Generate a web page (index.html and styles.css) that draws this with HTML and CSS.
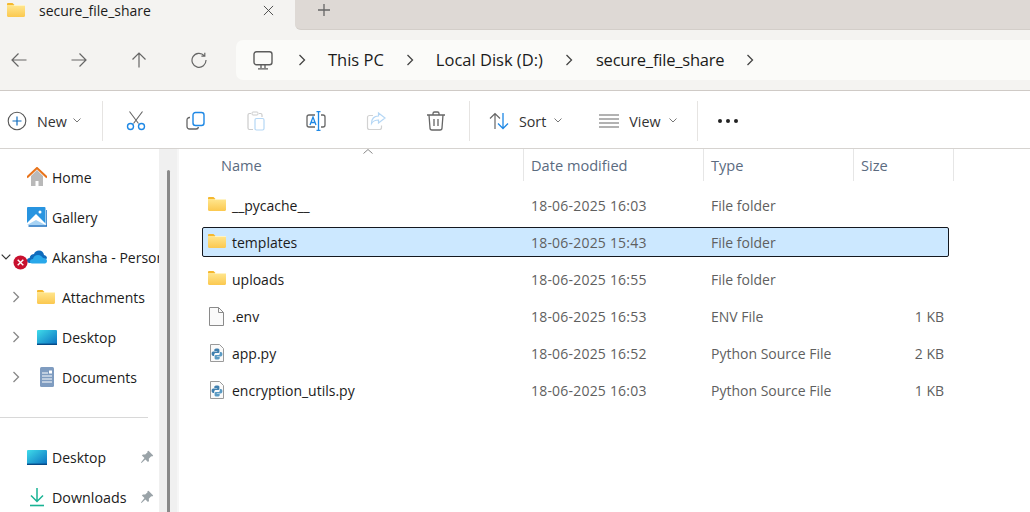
FILE: index.html
```html
<!DOCTYPE html>
<html>
<head>
    <title>secure_file_share</title>
    <link rel="stylesheet" href="styles.css">
</head>

<body>
    <svg class="defs" width="0" height="0">
        <defs>
            <linearGradient id="folderFill" x1="0" y1="0" x2="0" y2="1">
                <stop offset="0" stop-color="#ffe68f"/>
                <stop offset="1" stop-color="#fbc84f"/>
            </linearGradient>
            <linearGradient id="deskFill" x1="0" y1="0" x2="1" y2="1">
                <stop offset="0" stop-color="#3fdcea"/>
                <stop offset="1" stop-color="#0a6fc0"/>
            </linearGradient>
            <symbol id="folder" viewBox="0 0 18 14">
                <path d="M0 1.200C0 .5.500 0 1.200 0h4.300l2 2H0z" fill="#f5b82e"/>
                <path d="M0 2h16.800c.7 0 1.200.5 1.200 1.200v9.600c0 .7-.5 1.200-1.200 1.200H1.200C.5 14 0 13.500 0 12.800z" fill="url(#folderFill)"/>
                <path d="M7 2.500h11" stroke="#fff3c4" stroke-width="1"/>
            </symbol>
            <symbol id="pyfile" viewBox="0 0 14 18">
                <path d="M.5.500h9l4 4v13H.5z" fill="#fafafa" stroke="#9a9a9a"/>
                <path d="M7 4.500c-1.800 0-2.700.5-2.700 1.500v1.100h2.900v.5H3.200C2.200 7.600 1.600 8.500 1.600 9.800s.6 2.100 1.600 2.100h1v-1.300c0-.9.700-1.600 1.600-1.600h2.300c.7 0 1.300-.6 1.300-1.300V6C9.400 5 8.800 4.500 7 4.500z" fill="#3f7fae"/>
                <path d="M7 15.500c1.800 0 2.700-.5 2.700-1.500v-1.100H6.800v-.5h4c1 0 1.600-.9 1.600-2.200s-.6-2.100-1.600-2.100h-1v1.300c0 .9-.7 1.600-1.600 1.600H5.900c-.7 0-1.300.6-1.300 1.300V14c0 1 .6 1.500 2.400 1.500z" fill="#5a9bc4"/>
            </symbol>
            <symbol id="pin" viewBox="0 0 14 14">
                <path d="M8.500.8l4.700 4.700-1 1-1-.2-2.400 2.400.2 2.300-1 1-2.600-2.600L1.500 13 .9 12.400l3.600-4.400L1.900 5.400l1-1 2.300.2 2.400-2.400-.2-1z" fill="#9aa3a8"/>
            </symbol>
            <symbol id="chev" viewBox="0 0 8 12">
                <path d="M1.500 1l5 5-5 5" fill="none" stroke="currentColor" stroke-width="1.300"/>
            </symbol>
            <symbol id="caret" viewBox="0 0 8 5">
                <path d="M.5.500L4 4 7.500.500" fill="none" stroke="currentColor" stroke-width="1"/>
            </symbol>
        </defs>
    </svg>

    <div class="tabs">
        <div class="tab">
            <svg class="tab-folder"><use href="#folder"/></svg>
            <span class="tab-title">secure_file_share</span>
            <svg class="tab-close" viewBox="0 0 12 12"><path d="M1 1l10 10M11 1L1 11" stroke="#444" stroke-width="1" fill="none"/></svg>
        </div>
        <div class="tab-rest">
            <svg class="tab-plus" viewBox="0 0 12 12"><path d="M6 0v12M0 6h12" stroke="#666" stroke-width="1.300" fill="none"/></svg>
        </div>
    </div>

    <div class="navbar">
        <div class="nav-buttons">
            <svg class="nav-ico" viewBox="0 0 16 16"><path d="M15.500 8H1M7.500 1.500L1 8l6.500 6.500" fill="none" stroke="#666" stroke-width="1.200"/></svg>
            <svg class="nav-ico" viewBox="0 0 16 16"><path d="M.5 8H15M8.500 1.500L15 8l-6.500 6.500" fill="none" stroke="#666" stroke-width="1.200"/></svg>
            <svg class="nav-ico" viewBox="0 0 16 16"><path d="M8 15.500V1M1.500 7.500L8 1l6.500 6.500" fill="none" stroke="#666" stroke-width="1.200"/></svg>
            <svg class="nav-ico" viewBox="0 0 16 16"><path d="M13.200 3.600A7 7 0 1 0 15 8M13.800 .8v3.400h-3.400" fill="none" stroke="#666" stroke-width="1.200"/></svg>
        </div>
        <div class="address">
            <svg class="pc-ico" viewBox="0 0 20 19"><rect x="1" y=".7" width="18" height="13" rx="2.500" fill="none" stroke="#5c5c5c" stroke-width="1.400"/><path d="M8 14v3M12 14v3M5 17.800h10" stroke="#5c5c5c" stroke-width="1.300" fill="none"/></svg>
            <svg class="crumb-chev"><use href="#chev"/></svg>
            <span class="crumb">This PC</span>
            <svg class="crumb-chev"><use href="#chev"/></svg>
            <span class="crumb">Local Disk (D:)</span>
            <svg class="crumb-chev"><use href="#chev"/></svg>
            <span class="crumb crumb-last">secure_file_share</span>
            <svg class="crumb-chev"><use href="#chev"/></svg>
        </div>
    </div>

    <div class="commands">
        <div class="cmd cmd-new">
            <svg class="cmd-ico" viewBox="0 0 20 20"><circle cx="10" cy="10" r="8.800" fill="none" stroke="#555" stroke-width="1.100"/><path d="M10 5.500v9M5.500 10h9" stroke="#0f6cbd" stroke-width="1.200"/></svg>
            <span>New</span>
            <svg class="cmd-caret"><use href="#caret"/></svg>
        </div>
        <div class="sep sep-new"></div>
        <div class="cmd-icons">
            <svg class="cmd-ico" viewBox="0 0 20 20"><path d="M3.500 .5l9 12M16.500 .5l-9 12" stroke="#666" stroke-width="1.100" fill="none"/><circle cx="4.500" cy="15.500" r="3" fill="none" stroke="#1e88e5" stroke-width="1.400"/><circle cx="15.500" cy="15.500" r="3" fill="none" stroke="#1e88e5" stroke-width="1.400"/></svg>
            <svg class="cmd-ico" viewBox="0 0 20 20"><path d="M4 6.500H3.500A2.500 2.500 0 0 0 1 9v6.500A2.500 2.500 0 0 0 3.500 18H10a2.500 2.500 0 0 0 2.500-2" fill="none" stroke="#666" stroke-width="1.300"/><rect x="7" y="1.500" width="11" height="13" rx="2.500" fill="none" stroke="#1e88e5" stroke-width="1.400"/></svg>
            <svg class="cmd-ico" viewBox="0 0 20 20"><path d="M5 2.500H3.500A1.500 1.500 0 0 0 2 4v13a1.500 1.500 0 0 0 1.500 1.500H7M13 2.500h1.500A1.500 1.500 0 0 1 16 4v2" fill="none" stroke="#ccc" stroke-width="1.200"/><rect x="6" y="1" width="6" height="3" rx="1" fill="none" stroke="#ccc"/><rect x="9" y="7.500" width="9" height="11.500" rx="1.500" fill="none" stroke="#b5d7f5" stroke-width="1.200"/></svg>
            <svg class="cmd-ico" viewBox="0 0 20 20"><path d="M9 4H3a2 2 0 0 0-2 2v8a2 2 0 0 0 2 2h6M15 4h2a2 2 0 0 1 2 2v8a2 2 0 0 1-2 2h-2" fill="none" stroke="#666" stroke-width="1.300"/><path d="M4 14l3-8 3 8M5 11.500h4" fill="none" stroke="#1e88e5" stroke-width="1.300"/><path d="M12.500 .7v18.600M10.500 .7h4M10.500 19.300h4" stroke="#1e88e5" stroke-width="1.300" fill="none"/></svg>
            <svg class="cmd-ico" viewBox="0 0 20 20"><path d="M7 4.500H3.500A2 2 0 0 0 1.500 6.500v10a2 2 0 0 0 2 2h10a2 2 0 0 0 2-2v-2" fill="none" stroke="#d2d2d2" stroke-width="1.200"/><path d="M12.500 2v3C8 5 5.500 8 5.500 12.500 7 10 9.500 9 12.500 9v3l6.500-5z" fill="none" stroke="#b5d7f5" stroke-width="1.200"/></svg>
            <svg class="cmd-ico" viewBox="0 0 20 20"><path d="M1 4h18M7 4V2.500A1.500 1.500 0 0 1 8.500 1h3A1.500 1.500 0 0 1 13 2.500V4M3 4l1 13a2 2 0 0 0 2 2h8a2 2 0 0 0 2-2l1-13M8 8v7M12 8v7" fill="none" stroke="#666" stroke-width="1.300"/></svg>
        </div>
        <div class="sep"></div>
        <div class="cmd cmd-sort">
            <svg class="cmd-ico" viewBox="0 0 20 18"><path d="M6 17V1.500M1 6.500l5-5 5 5" fill="none" stroke="#666" stroke-width="1.200"/><path d="M14 1v15.500M9 11.500l5 5 5-5" fill="none" stroke="#1e88e5" stroke-width="1.300"/></svg>
            <span>Sort</span>
            <svg class="cmd-caret"><use href="#caret"/></svg>
        </div>
        <div class="cmd cmd-view">
            <svg class="cmd-ico" viewBox="0 0 20 14"><path d="M0 1h20M0 5h20M0 9h20M0 13h20" stroke="#666" stroke-width="1.200"/></svg>
            <span>View</span>
            <svg class="cmd-caret"><use href="#caret"/></svg>
        </div>
        <div class="sep sep-view"></div>
        <div class="cmd-more"><i></i><i></i><i></i></div>
    </div>

    <div class="main">
        <nav class="sidebar">
            <div class="side-list">
                <div class="side-item lvl0">
                    <svg class="side-ico" viewBox="0 0 20 20"><path d="M4 9v10h4.500v-5h3v5H16V9l-6-6z" fill="#b9b9b9"/><path d="M0 10.500L10 1l10 9.500" fill="none" stroke="#e8731a" stroke-width="2"/></svg>
                    <span>Home</span>
                </div>
                <div class="side-item lvl0">
                    <svg class="side-ico" viewBox="0 0 20 20"><rect width="18.500" height="18" rx="1" fill="#2894e0"/><path d="M1.500 19h18.500V3" fill="none" stroke="#1a6fc0" stroke-width="1.500"/><path d="M0 16l9-9 9.500 9.500V18H0z" fill="#fff"/><path d="M0 18l9-5 9.500 5z" fill="#a7d3f4"/><circle cx="13" cy="5" r="1.500" fill="#fff"/></svg>
                    <span>Gallery</span>
                </div>
                <div class="side-item lvl0">
                    <svg class="side-arrow open" viewBox="0 0 10 6"><path d="M.7.700L5 5 9.300.700" fill="none" stroke="#333" stroke-width="1.200"/></svg>
                    <svg class="side-ico" viewBox="0 0 20 14"><path d="M7 13H2.500C1 13 0 12 0 10.500 0 9 1 8 2.600 8 3 5.500 5 4 7 4c.6-2 2.600-3.500 5-3.500 2.700 0 4.800 2 5 4.500C19 5.300 20 6.800 20 8.500" fill="#0f6cbd"/><path d="M5 13.500c-1.500 0-2-1-2-2 0-1.500 1-2.500 3-2.500.5-2.500 2.500-4 5-4s4 1.500 5 3c2.500 0 4 1 4 3s-1.500 2.500-3 2.500z" fill="#28a8ea"/></svg>
                    <span class="side-clip">Akansha - Personal</span>
                    <svg class="side-err" viewBox="0 0 16 16"><circle cx="8" cy="8" r="7.500" fill="#c8102e"/><path d="M5 5l6 6M11 5l-6 6" stroke="#fff" stroke-width="1.500"/></svg>
                </div>
                <div class="side-item lvl1">
                    <svg class="side-arrow"><use href="#chev"/></svg>
                    <svg class="side-ico folder-ico"><use href="#folder"/></svg>
                    <span>Attachments</span>
                </div>
                <div class="side-item lvl1">
                    <svg class="side-arrow"><use href="#chev"/></svg>
                    <svg class="side-ico desk-ico" viewBox="0 0 20 15"><rect width="20" height="15" rx="1" fill="url(#deskFill)"/><path d="M0 14.300h20" stroke="#084a86" stroke-width="1.400"/></svg>
                    <span>Desktop</span>
                </div>
                <div class="side-item lvl1">
                    <svg class="side-arrow"><use href="#chev"/></svg>
                    <svg class="side-ico doc-ico" viewBox="0 0 14 20"><rect width="14" height="20" rx="1.500" fill="#7f9cc0"/><path d="M2 6h6M2 9h10M2 12h10M2 15h10" stroke="#fff" stroke-width="1"/><rect x="9" y="3.500" width="3" height="3" fill="#fff"/></svg>
                    <span>Documents</span>
                </div>
            </div>
            <div class="side-divider"></div>
            <div class="side-list">
                <div class="side-item lvl0">
                    <svg class="side-ico desk-ico" viewBox="0 0 20 15"><rect width="20" height="15" rx="1" fill="url(#deskFill)"/><path d="M0 14.300h20" stroke="#084a86" stroke-width="1.400"/></svg>
                    <span>Desktop</span>
                    <svg class="side-pin"><use href="#pin"/></svg>
                </div>
                <div class="side-item lvl0">
                    <svg class="side-ico" viewBox="0 0 20 20"><path d="M10 1v13M4 8.500l6 6 6-6" fill="none" stroke="#19b394" stroke-width="1.500"/><path d="M3 18.500h14" stroke="#19b394" stroke-width="1.600"/></svg>
                    <span class="side-wide">Downloads</span>
                    <svg class="side-pin"><use href="#pin"/></svg>
                </div>
            </div>
        </nav>
        <div class="scrollbar"><div class="scroll-thumb"></div></div>

        <section class="files">
            <svg class="sort-caret" viewBox="0 0 10 5"><path d="M.5 4.500L5 .5l4.500 4" fill="none" stroke="#888" stroke-width="1"/></svg>
            <div class="file-head">
                <div class="col-head">Name</div>
                <div class="col-head">Date modified</div>
                <div class="col-head">Type</div>
                <div class="col-head">Size</div>
            </div>
            <div class="file-list">
                <div class="file-row">
                    <div class="file-name"><svg class="file-ico"><use href="#folder"/></svg>__pycache__</div>
                    <div>18-06-2025 16:03</div>
                    <div>File folder</div>
                    <div></div>
                </div>
                <div class="file-row selected">
                    <div class="file-name"><svg class="file-ico"><use href="#folder"/></svg>templates</div>
                    <div>18-06-2025 15:43</div>
                    <div>File folder</div>
                    <div></div>
                </div>
                <div class="file-row">
                    <div class="file-name"><svg class="file-ico"><use href="#folder"/></svg>uploads</div>
                    <div>18-06-2025 16:55</div>
                    <div>File folder</div>
                    <div></div>
                </div>
                <div class="file-row">
                    <div class="file-name"><svg class="file-ico env-ico" viewBox="0 0 15 19"><path d="M.5.500h9l5 5v13H.5z" fill="#fafafa" stroke="#8a8a8a"/><path d="M9.500 .5v5h5" fill="none" stroke="#8a8a8a"/></svg>.env</div>
                    <div>18-06-2025 16:53</div>
                    <div>ENV File</div>
                    <div class="file-size">1 KB</div>
                </div>
                <div class="file-row">
                    <div class="file-name"><svg class="file-ico py-ico"><use href="#pyfile"/></svg>app.py</div>
                    <div>18-06-2025 16:52</div>
                    <div>Python Source File</div>
                    <div class="file-size">2 KB</div>
                </div>
                <div class="file-row">
                    <div class="file-name"><svg class="file-ico py-ico"><use href="#pyfile"/></svg>encryption_utils.py</div>
                    <div>18-06-2025 16:03</div>
                    <div>Python Source File</div>
                    <div class="file-size">1 KB</div>
                </div>
            </div>
        </section>
    </div>
</body>

</html>
```

FILE: styles.css
```css
* {
    box-sizing: border-box;
}
html, body {
    height: 100%;
}
body {
    font-family: "Open Sans", "Noto Sans", sans-serif;
    font-size: 13.500px;
    color: #1b1b1b;
    margin: 0;
    height: 512px;
    overflow: hidden;
    background-color: #fff;
    display: flex;
    flex-direction: column;
}
.defs {
    position: absolute;
}

/* tabs */
.tabs {
    display: flex;
    height: 30px;
    flex: none;
    background-color: #f4f3f1;
}
.tab {
    width: 295px;
    display: flex;
    align-items: center;
    padding: 0 21px 10px 7px;
    flex: none;
}
.tab-folder {
    width: 18px;
    height: 14px;
    margin-top: -1px;
}
.tab-title {
    margin-left: 14px;
    font-size: 14px;
    flex: 1;
}
.tab-close {
    width: 11px;
    height: 11px;
}
.tab-rest {
    flex: 1;
    background-color: #ded9d5;
    border-bottom: 1px solid #d3cec9;
    border-bottom-left-radius: 6px;
    padding: 4px 0 0 23px;
}
.tab-plus {
    display: block;
    width: 12px;
    height: 12px;
}

/* nav row */
.navbar {
    height: 61px;
    flex: none;
    display: flex;
    align-items: center;
    background-color: #f4f3f1;
    border-bottom: 1px solid #cfcac6;
}
.nav-buttons {
    width: 236px;
    flex: none;
    display: flex;
    padding-left: 11px;
    gap: 44px;
}
.nav-ico {
    width: 16px;
    height: 16px;
}
.address {
    flex: 1;
    height: 40px;
    background-color: #fbfbf9;
    border-radius: 7px 0 0 7px;
    display: flex;
    align-items: center;
    padding-left: 17px;
    font-size: 16.500px;
}
.pc-ico {
    width: 20px;
    height: 19px;
    margin-right: 3px;
}
.crumb-chev {
    width: 8px;
    height: 12px;
    margin: 0 22px;
    color: #444;
}
.crumb {
    white-space: nowrap;
    margin-top: -2px;
}
.crumb-last {
    letter-spacing: -.2px;
    margin-left: 1px;
}

/* command bar */
.commands {
    height: 58px;
    flex: none;
    display: flex;
    align-items: center;
    border-bottom: 1px solid #d6d3d0;
    padding: 2px 0 0 7px;
    font-size: 14.300px;
    color: #333;
}
.cmd {
    display: flex;
    align-items: center;
}
.cmd span {
    padding-top: 1px;
}
.cmd-ico {
    width: 20px;
    height: 20px;
    flex: none;
}
.cmd-caret {
    width: 8px;
    height: 5px;
    color: #777;
    margin-left: 6px;
}
.cmd-new span {
    margin-left: 10px;
}
.sep {
    width: 1px;
    height: 40px;
    background-color: #e6e4e2;
    margin-right: 19px;
}
.sep-new {
    margin-left: 21px;
}
.cmd-icons {
    display: flex;
    gap: 40px;
    margin-left: 4px;
    margin-right: 23px;
}
.cmd-sort {
    gap: 10px;
    margin-right: 37px;
}
.cmd-sort .cmd-caret,
.cmd-view .cmd-caret {
    margin-left: -2px;
}
.cmd-view {
    gap: 10px;
}
.cmd-view .cmd-ico {
    height: 14px;
}
.sep-view {
    margin-left: 20px;
}
.cmd-more {
    display: flex;
    gap: 4px;
    margin-left: 1px;
}
.cmd-more i {
    width: 4px;
    height: 4px;
    border-radius: 50%;
    background-color: #222;
}

/* main area */
.main {
    flex: 1;
    display: flex;
    min-height: 0;
}
.sidebar {
    width: 159px;
    flex: none;
    padding-top: 8px;
    font-size: 14px;
    overflow: hidden;
}
.side-item {
    position: relative;
    height: 40px;
    display: flex;
    align-items: center;
    white-space: nowrap;
}
.lvl0 {
    padding-left: 27px;
}
.lvl1 {
    padding-left: 12px;
}
.side-ico {
    width: 20px;
    height: 20px;
    flex: none;
    margin-right: 5px;
}
.side-item .desk-ico {
    height: 15px;
}
.side-item .folder-ico {
    width: 18px;
    height: 14px;
    margin-left: 17px;
    margin-right: 7px;
}
.lvl1 .desk-ico {
    margin-left: 17px;
}
.side-item .doc-ico {
    width: 14px;
    margin-left: 20px;
    margin-right: 8px;
}
.side-arrow {
    width: 8px;
    height: 12px;
    color: #888;
    flex: none;
}
.side-arrow.open {
    position: absolute;
    left: 1px;
    top: 17px;
    width: 10px;
    height: 6px;
}
.side-clip {
    overflow: hidden;
}
.side-wide {
    font-size: 14.300px;
}
.side-err {
    position: absolute;
    left: 13px;
    top: 18px;
    width: 15px;
    height: 15px;
}
.side-pin {
    position: absolute;
    left: 140px;
    top: 13px;
    width: 14px;
    height: 14px;
}
.side-divider {
    height: 1px;
    width: 148px;
    background-color: #d8d8d8;
    margin: 20px 0 19px;
}
.scrollbar {
    width: 20px;
    flex: none;
    background-color: #f0f0f0;
    border-right: 2px solid #f6f6f6;
    padding: 21px 0 0 8px;
}
.scroll-thumb {
    width: 3px;
    height: 100%;
    background-color: #8a8a8a;
    border-radius: 2px 2px 0 0;
}

/* file list */
.files {
    flex: 1;
    position: relative;
    padding-left: 23px;
    color: #5f5f5f;
    font-size: 14px;
}
.sort-caret {
    position: absolute;
    left: 184px;
    top: 0;
    width: 10px;
    height: 5px;
}
.file-head,
.file-row {
    display: grid;
    grid-template-columns: 321px 180px 150px 100px;
    width: 751px;
    align-items: center;
}
.file-head {
    height: 32px;
    margin: 0 0 9px 1px;
    color: #5b6b7f;
    font-size: 14.600px;
}
.col-head {
    height: 100%;
    display: flex;
    align-items: center;
    padding-left: 7px;
    border-right: 1px solid #e6e6e6;
}
.col-head:first-child {
    padding-left: 18px;
}
.file-list {
    display: flex;
    flex-direction: column;
    gap: 7px;
}
.file-row {
    height: 30px;
    border: 1px solid transparent;
    border-radius: 2px;
}
.file-row > div {
    padding-left: 7px;
}
.file-row > div:nth-child(2) {
    letter-spacing: .2px;
}
.file-row > .file-name {
    display: flex;
    align-items: center;
    color: #1b1b1b;
    padding-left: 5px;
}
.file-ico {
    width: 18px;
    height: 14px;
    margin: -2px 6px 0 0;
    flex: none;
}
.file-ico.env-ico {
    width: 15px;
    height: 19px;
    margin: 0 8px 0 1px;
}
.file-ico.py-ico {
    width: 14px;
    height: 18px;
    margin: 0 8px 0 2px;
}
.file-row > .file-size {
    text-align: right;
    padding-right: 10px;
}
.selected {
    width: 747px;
    background-color: #cce8ff;
    border-color: #14181f;
}
```
